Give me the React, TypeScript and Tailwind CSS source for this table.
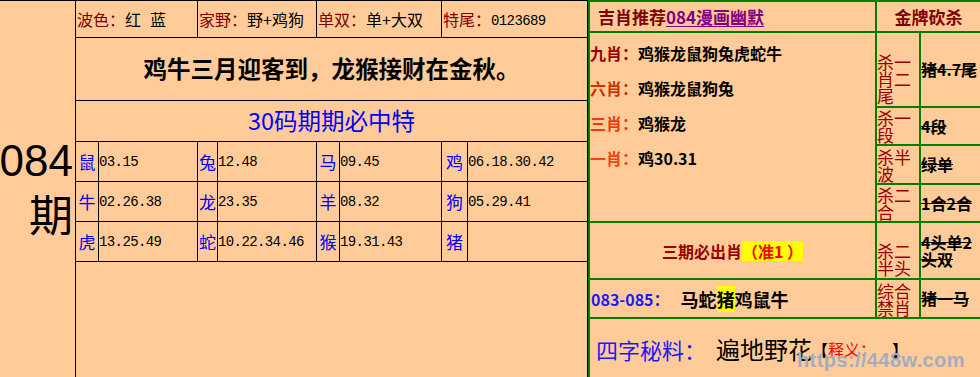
import React from 'react';

const cell = 'bg-[#ffcc99]';
const cjk = "font-['Noto_Sans_CJK_SC',sans-serif]";
const mono = "font-['Liberation_Mono','Noto_Sans_CJK_SC',monospace]";

const zodiac = [
  [['鼠', '03.15'], ['兔', '12.48'], ['马', '09.45'], ['鸡', '06.18.30.42']],
  [['牛', '02.26.38'], ['龙', '23.35'], ['羊', '08.32'], ['狗', '05.29.41']],
  [['虎', '13.25.49'], ['蛇', '10.22.34.46'], ['猴', '19.31.43'], ['猪', '']],
];

const TopCell = ({ label, children }: { label: string; children: React.ReactNode }) => (
  <div className={`${cell} col-span-2 flex items-center pl-px text-[16px] leading-none`}>
    <span className="text-[#800000]">{label}</span>
    <span className="whitespace-pre text-black">{children}</span>
  </div>
);

const KillLabel = ({ text, bottom }: { text: string; bottom?: boolean }) => (
  <div className={`${cell} flex ${bottom ? 'items-end pb-[2px]' : 'items-center'}`}>
    <span className="text-[17px] leading-[17px] text-[#990000]">{text}</span>
  </div>
);

const KillValue = ({ text }: { text: string }) => (
  <div className={`${cell} flex items-center`}>
    <span className="text-[16px] font-bold leading-[17px] text-black line-through">{text}</span>
  </div>
);

const picks = [
  { label: '九肖：', color: 'text-[#990000]', value: '鸡猴龙鼠狗兔虎蛇牛' },
  { label: '六肖：', color: 'text-[#cc3300]', value: '鸡猴龙鼠狗兔' },
  { label: '三肖：', color: 'text-[#ee3a10]', value: '鸡猴龙' },
  { label: '一肖：', color: 'text-[#ee4411]', value: '鸡30.31' },
];

export default function App() {
  return (
    <div className={`relative flex h-[377px] w-[980px] overflow-hidden bg-[#ffcc99] ${cjk}`}>
      {/* left table */}
      <div className="grid h-full w-[588px] shrink-0 grid-cols-[75px_22px_98px_19px_98px_22px_101px_25px_119px] grid-rows-[36px_62px_40px_39px_39px_39px_1fr] gap-px bg-black pt-px pr-px">
        <div className={`${cell} row-span-7 flex items-center justify-end pr-[2px]`}>
          <div className="text-right text-[44px] leading-[56px] text-black font-['Liberation_Sans','Noto_Sans_CJK_SC',sans-serif]">
            084
            <br />期
          </div>
        </div>

        <TopCell label="波色：">
          红<span className="inline-block w-[9px]" />蓝
        </TopCell>
        <TopCell label="家野：">野+鸡狗</TopCell>
        <TopCell label="单双：">单+大双</TopCell>
        <TopCell label="特尾：">
          <span className={`${mono} text-[14px] tracking-[-0.6px]`}>0123689</span>
        </TopCell>

        <div className={`${cell} col-span-8 flex items-center justify-center`}>
          <span className="text-[23.5px] font-bold leading-none text-black">鸡牛三月迎客到，龙猴接财在金秋。</span>
        </div>

        <div className={`${cell} col-span-8 flex items-center justify-center`}>
          <span className="text-[23.5px] leading-none text-[#0000ff]">30码期期必中特</span>
        </div>

        {zodiac.map((row) =>
          row.map(([name, nums]) => (
            <React.Fragment key={name}>
              <div className={`${cell} flex items-center justify-center text-[17px] leading-none text-[#0000ff]`}>
                {name}
              </div>
              <div className={`${cell} ${mono} flex items-center text-[14px] leading-none tracking-[-0.6px] text-black`}>
                {nums}
              </div>
            </React.Fragment>
          ))
        )}

        <div className={`${cell} col-span-8`} />
      </div>

      {/* right panel */}
      <div className="grid h-full flex-1 grid-cols-[285px_42px_1fr] grid-rows-[29px_73px_36px_37px_36px_55px_37px_1fr] gap-[2px] bg-[#008000] pt-[2px] pl-[2px]">
        <div className={`${cell} flex items-center pl-[8px] text-[17px] font-bold leading-none`}>
          <span className="text-[#800000]">吉肖推荐</span>
          <span className="text-[#800080] underline underline-offset-2">084漫画幽默</span>
        </div>
        <div className={`${cell} col-span-2 flex items-center justify-center text-[17px] font-bold leading-none text-[#800000]`}>
          金牌砍杀
        </div>

        <div className={`${cell} row-span-4 flex flex-col pt-[2px]`}>
          {picks.map((p) => (
            <div key={p.label} className="flex h-[35px] items-center text-[16px] font-bold leading-none">
              <span className={p.color}>{p.label}</span>
              <span className="text-black">{p.value}</span>
            </div>
          ))}
        </div>
        <KillLabel text="杀一肖二尾" bottom />
        <KillValue text="猪4.7尾" />
        <KillLabel text="杀一段" />
        <KillValue text="4段" />
        <KillLabel text="杀半波" />
        <KillValue text="绿单" />
        <KillLabel text="杀二合" />
        <KillValue text="1合2合" />

        <div className={`${cell} flex items-center justify-center text-[16px] font-bold leading-none`}>
          <span className="text-[#990000]">三期必出肖</span>
          <span className="bg-[#ffff00] py-[2px] whitespace-pre text-[#ff0000]">（准1 ）</span>
        </div>
        <KillLabel text="杀二半头" bottom />
        <KillValue text="4头单2头双" />

        <div className={`${cell} flex items-center pl-px font-bold leading-none`}>
          <span className="text-[16px] text-[#1a1aff]">083-085：</span>
          <span className="ml-[11px] text-[18px] text-black">
            马蛇<span className="bg-[#ffff00]">猪</span>鸡鼠牛
          </span>
        </div>
        <KillLabel text="综合禁肖" />
        <KillValue text="猪一马" />

        <div className={`${cell} col-span-3 flex items-center pt-[2px] pl-[6px] leading-none`}>
          <span className="text-[22px] text-[#1a1aff]">四字秘料：</span>
          <span className="ml-[10px] text-[24px] text-black">遍地野花</span>
          <span className="text-[16px] font-bold text-black">【</span>
          <span className="text-[16px] text-[#ff0000]">释义：</span>
          <span className="inline-block w-[16px]" />
          <span className="text-[16px] font-bold text-black">】</span>
        </div>
      </div>

      <div className="pointer-events-none absolute left-[797px] top-[350px] text-[20px] font-bold leading-none tracking-[0.4px] text-[#a3adbe] font-['Liberation_Sans',sans-serif]">
        https://448w.com
      </div>
    </div>
  );
}
